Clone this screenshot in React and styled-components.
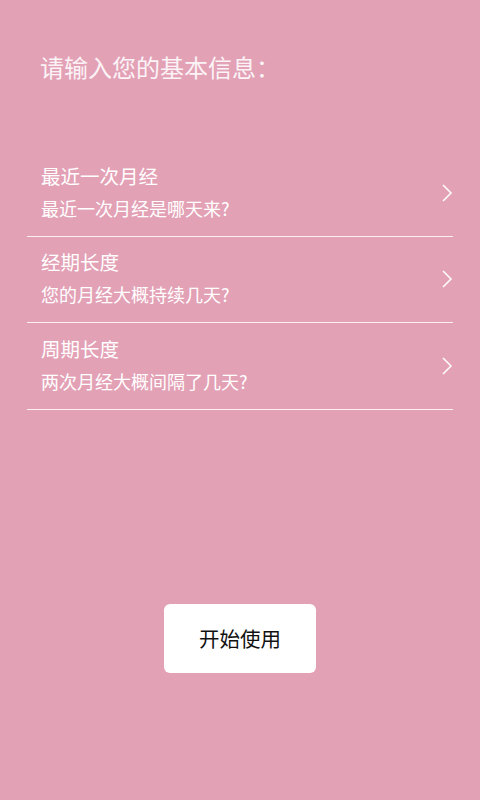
import React from "react";
import styled, { createGlobalStyle } from "styled-components";

const Global = createGlobalStyle`
  html, body { margin: 0; padding: 0; }
  body { background: #e3a1b6; font-family: "Noto Sans CJK SC", "Noto Sans", sans-serif; }
`;

const Page = styled.div`
  width: 480px;
  height: 800px;
  box-sizing: border-box;
  background: #e3a1b6;
  display: flex;
  flex-direction: column;
  padding-top: 51px;
`;

const Title = styled.h1`
  margin: 0 0 0 40px;
  font-size: 24px;
  line-height: 32px;
  font-weight: 400;
  color: #fbf3f6;
`;

const List = styled.div`
  margin: 67px 27px 0 27px;
  display: flex;
  flex-direction: column;
`;

const Row = styled.div`
  height: 86.5px;
  box-sizing: border-box;
  border-bottom: 1px solid #fbeff3;
  display: flex;
  align-items: center;
  padding: 0 0 0 14px;
`;

const Texts = styled.div`
  flex: 1;
  display: flex;
  flex-direction: column;
  gap: 7px;
  padding-bottom: 2px;
`;

const RowTitle = styled.div`
  font-size: 19.5px;
  line-height: 26px;
  color: #ffffff;
`;

const RowSub = styled.div`
  font-size: 18px;
  line-height: 25px;
  color: #ffffff;
`;

const Chevron = styled.svg`
  width: 12px;
  height: 20px;
  flex: none;
`;

const ButtonWrap = styled.div`
  flex: 1;
  display: flex;
  align-items: flex-start;
  justify-content: center;
  padding-top: 194px;
`;

const StartButton = styled.button`
  width: 152px;
  height: 69px;
  border: none;
  border-radius: 6px;
  background: #ffffff;
  color: #111111;
  font-family: "Noto Sans CJK SC", "Noto Sans", sans-serif;
  font-size: 20.5px;
  cursor: pointer;
`;

const rows = [
  { t: "最近一次月经", s: "最近一次月经是哪天来?" },
  { t: "经期长度", s: "您的月经大概持续几天?" },
  { t: "周期长度", s: "两次月经大概间隔了几天?" },
];

export default function App() {
  return (
    <>
      <Global />
      <Page>
        <Title>请输入您的基本信息：</Title>
        <List>
          {rows.map((r) => (
            <Row key={r.t}>
              <Texts>
                <RowTitle>{r.t}</RowTitle>
                <RowSub>{r.s}</RowSub>
              </Texts>
              <Chevron viewBox="0 0 12 20">
                <path d="M2 2 L10 10 L2 18" fill="none" stroke="#ffffff" strokeWidth="1.5" />
              </Chevron>
            </Row>
          ))}
        </List>
        <ButtonWrap>
          <StartButton>开始使用</StartButton>
        </ButtonWrap>
      </Page>
    </>
  );
}
